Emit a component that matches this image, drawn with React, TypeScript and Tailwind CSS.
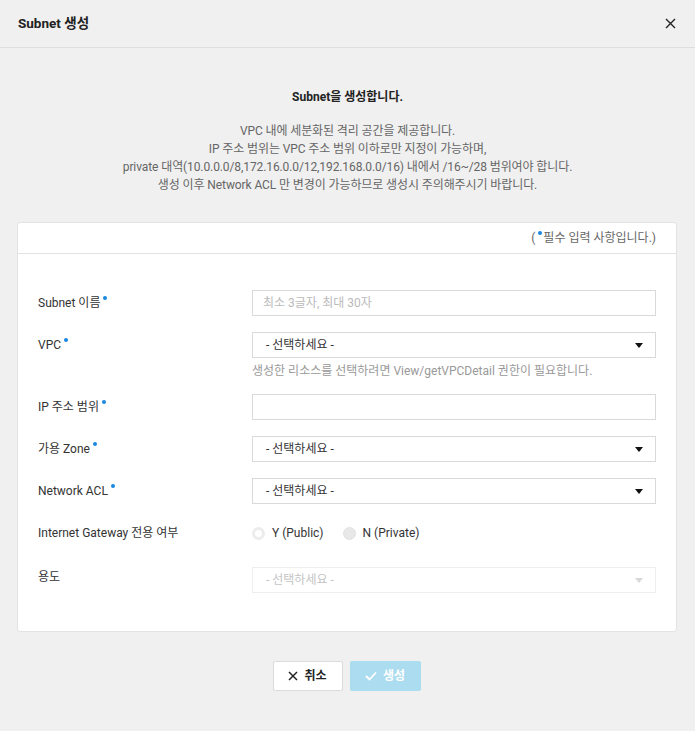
import { FunctionComponent, type ReactNode } from "react";

const Dot = () => (
  <span className="ml-[3px] inline-block h-[4px] w-[4px] -translate-y-[5px] rounded-full bg-[#1a87e0]" />
);

const Row: FunctionComponent<{ label: string; required?: boolean; children: ReactNode }> = ({
  label,
  required,
  children,
}) => (
  <div className="flex items-start">
    <div className="flex h-[26px] w-[214px] shrink-0 items-center text-[12px] text-[#333]">
      {label}
      {required && <Dot />}
    </div>
    <div className="flex-1">{children}</div>
  </div>
);

const Arrow = ({ color = "#111" }: { color?: string }) => (
  <svg width="8" height="5" viewBox="0 0 8 5">
    <path d="M0 0h8L4 5z" fill={color} />
  </svg>
);

const Select: FunctionComponent<{ disabled?: boolean }> = ({ disabled }) => (
  <div
    className={`flex h-[26px] items-center justify-between border pl-[13px] pr-[12px] text-[12px] ${
      disabled ? "border-[#eeeeee] text-[#c4c4c4]" : "border-[#d9d9d9] text-[#333]"
    }`}
  >
    <span>- 선택하세요 -</span>
    <Arrow color={disabled ? "#d8d8d8" : "#111"} />
  </div>
);

const Radio = ({ label, checked }: { label: string; checked?: boolean }) => (
  <div className="flex items-center gap-[7px]">
    {checked ? (
      <span className="inline-block h-[13px] w-[13px] rounded-full border-[3px] border-[#ececec] bg-white" />
    ) : (
      <span className="inline-block h-[13px] w-[13px] rounded-full border border-[#e2e2e2] bg-[#e8e8e8]" />
    )}
    <span className="text-[12px] text-[#333]">{label}</span>
  </div>
);

const App = () => {
  return (
    <div
      className="h-[731px] w-[695px] bg-[#f0f0f0] text-[#333]"
      style={{ fontFamily: 'Roboto, "Noto Sans CJK KR", sans-serif' }}
    >
      <div className="flex h-[48px] items-center justify-between border-b border-[#dedede] pl-[18px] pr-[19px]">
        <div className="text-[13.5px] font-bold text-[#222]">Subnet 생성</div>
        <svg width="11" height="11" viewBox="0 0 11 11">
          <path d="M1 1l9 9M10 1l-9 9" stroke="#222" strokeWidth="1.4" />
        </svg>
      </div>

      <div className="flex flex-col items-center pt-[40px]">
        <div className="text-[12px] font-bold leading-[18px] text-[#222]">Subnet을 생성합니다.</div>
        <div className="mt-[16px] text-center text-[12px] leading-[18px] tracking-[-0.1px] text-[#666]">
          <p>VPC 내에 세분화된 격리 공간을 제공합니다.</p>
          <p>IP 주소 범위는 VPC 주소 범위 이하로만 지정이 가능하며,</p>
          <p>private 대역(10.0.0.0/8,172.16.0.0/12,192.168.0.0/16) 내에서 /16~/28 범위여야 합니다.</p>
          <p>생성 이후 Network ACL 만 변경이 가능하므로 생성시 주의해주시기 바랍니다.</p>
        </div>
      </div>

      <div className="ml-[17px] mr-[18px] mt-[28px] h-[410px] rounded-[3px] border border-[#e3e3e3] bg-white">
        <div className="flex h-[31px] items-center justify-end border-b border-[#e3e3e3] pr-[20px] text-[12px] text-[#666]">
          (<Dot />
          <span className="ml-[1px]">필수 입력 사항입니다.)</span>
        </div>

        <div className="flex flex-col gap-[16px] px-[20px] pt-[36px]">
          <Row label="Subnet 이름" required>
            <div className="flex h-[26px] items-center border border-[#d9d9d9] pl-[10px] text-[12px] text-[#bbb]">
              최소 3글자, 최대 30자
            </div>
          </Row>
          <Row label="VPC" required>
            <Select />
            <div className="mt-[7px] text-[12px] leading-[13px] text-[#999]">
              생성한 리소스를 선택하려면 View/getVPCDetail 권한이 필요합니다.
            </div>
          </Row>
          <Row label="IP 주소 범위" required>
            <div className="h-[26px] border border-[#d9d9d9]" />
          </Row>
          <Row label="가용 Zone" required>
            <Select />
          </Row>
          <Row label="Network ACL" required>
            <Select />
          </Row>
          <Row label="Internet Gateway 전용 여부">
            <div className="flex h-[26px] items-center gap-[19px]">
              <Radio label="Y (Public)" checked />
              <Radio label="N (Private)" />
            </div>
          </Row>
          <div className="flex items-start pt-[5px]">
            <div className="w-[214px] shrink-0 pt-[1px] text-[12px] leading-[18px] text-[#333]">용도</div>
            <div className="flex-1">
              <Select disabled />
            </div>
          </div>
        </div>
      </div>

      <div className="mt-[29px] flex justify-center gap-[7px] pr-[2px]">
        <div className="flex h-[30px] w-[70px] items-center justify-center gap-[6px] rounded-[2px] border border-[#dcdcdc] bg-white text-[12px] font-bold text-[#222]">
          <svg width="10" height="10" viewBox="0 0 10 10">
            <path d="M1 1l8 8M9 1l-8 8" stroke="#222" strokeWidth="1.5" />
          </svg>
          취소
        </div>
        <div className="flex h-[30px] w-[71px] items-center justify-center gap-[6px] rounded-[2px] bg-[#acdcef] text-[12px] font-bold text-white">
          <svg width="12" height="10" viewBox="0 0 12 10">
            <path d="M1 5l3.5 3.5L11 1.5" stroke="#fff" strokeWidth="1.8" fill="none" />
          </svg>
          생성
        </div>
      </div>
    </div>
  );
};

export default App;
